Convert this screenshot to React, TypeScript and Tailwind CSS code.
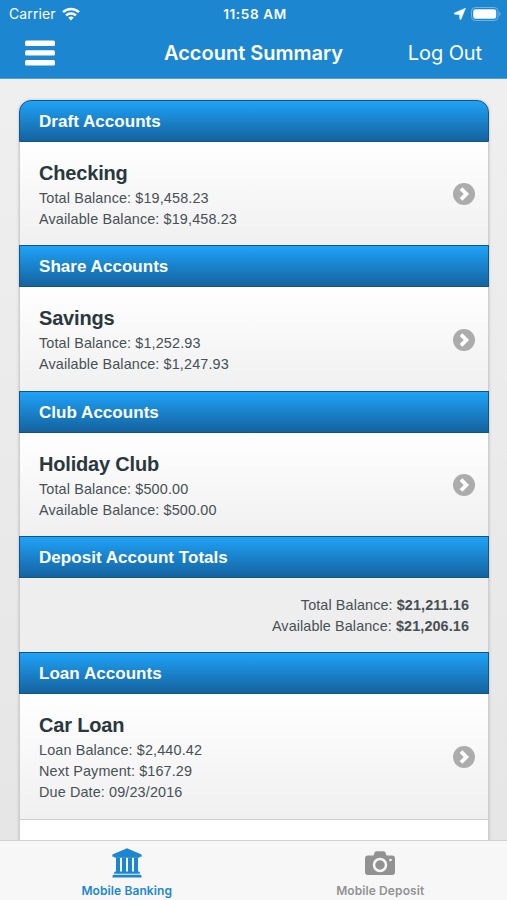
import React from "react";

type Account = {
  header: string;
  name: string;
  lines: string[];
  height: string;
};

const accounts: Account[] = [
  {
    header: "Draft Accounts",
    name: "Checking",
    height: "h-[103px]",
    lines: ["Total Balance: $19,458.23", "Available Balance: $19,458.23"],
  },
  {
    header: "Share Accounts",
    name: "Savings",
    height: "h-[104px]",
    lines: ["Total Balance: $1,252.93", "Available Balance: $1,247.93"],
  },
  {
    header: "Club Accounts",
    name: "Holiday Club",
    height: "h-[103px]",
    lines: ["Total Balance: $500.00", "Available Balance: $500.00"],
  },
];

const loan: Account = {
  header: "Loan Accounts",
  name: "Car Loan",
  height: "h-[125px]",
  lines: ["Loan Balance: $2,440.42", "Next Payment: $167.29", "Due Date: 09/23/2016"],
};

function SectionHeader({ title, first }: { title: string; first?: boolean }) {
  return (
    <div
      className={
        "h-[42px] shrink-0 border border-[#145580] bg-linear-to-b from-[#1fa3f8] to-[#14639f] pl-[19px] text-[17px] leading-[41px] font-bold tracking-[0.04px] text-white " +
        (first ? "rounded-t-[12px]" : "")
      }
    >
      {title}
    </div>
  );
}

function AccountRow({ account }: { account: Account }) {
  return (
    <div
      className={
        "flex shrink-0 items-center justify-between border-x border-[#cfcfcf] bg-linear-to-b from-white to-[#f0f0f0] pr-[13px] pl-[19px] " +
        account.height
      }
    >
      <div className="pt-1">
        <h2 className="mb-[3px] text-[20px] leading-[23px] font-bold tracking-[-0.18px] text-[#2a383e]">{account.name}</h2>
        {account.lines.map((line) => (
          <p key={line} className="text-[14.4px] leading-[21px] tracking-[0.13px] text-[#475054]">
            {line}
          </p>
        ))}
      </div>
      <svg viewBox="0 0 22 22" className="mt-px size-[22px]" fill="none">
        <circle cx="11" cy="11" r="11" fill="#acacac" />
        <path d="M8 5.6 L13.4 11 L8 16.4" stroke="#fff" strokeWidth="3.8" />
      </svg>
    </div>
  );
}

export default function App() {
  return (
    <div className="flex h-[900px] w-[507px] flex-col overflow-hidden bg-linear-to-b from-[#f0f0f0] to-[#e5e5e5] font-['Liberation_Sans',Arial,sans-serif]">
      <header className="h-[79px] shrink-0 border-b border-[#4ba0d9] bg-[#1c87d0] font-[Inter,sans-serif] text-white">
        <div className="grid h-[27px] grid-cols-3 items-center pr-[6px] pl-[9px] text-[13px]">
          <div className="flex items-center gap-[6px]">
            <span className="text-[14px] tracking-[0.1px]">Carrier</span>
            <svg viewBox="0 0 18 14" className="h-[14px] w-[18px]" fill="none" stroke="#fff" strokeWidth="2.4">
              <path d="M1 5.2 C5.5 .9 12.5 .9 17 5.2" />
              <path d="M4 8.4 C6.8 5.8 11.2 5.8 14 8.4" />
              <path d="M6.2 10.6 C7.8 9.2 10.2 9.2 11.8 10.6 L9 13.6 Z" fill="#fff" stroke="none" />
            </svg>
          </div>
          <span className="pt-px text-center text-[13.5px] font-semibold tracking-[0.65px]">11:58 AM</span>
          <div className="flex items-center justify-end gap-[5px]">
            <svg viewBox="0 0 12 12" className="size-3" fill="#fff">
              <path d="M11.5 .2 L.4 4.9 Q-.3 5.8 .8 6.3 L5.4 6.6 L5.9 11.3 Q6.3 12.2 7 11.3 Z" stroke="#fff" strokeWidth=".5" />
            </svg>
            <svg viewBox="0 0 30 14" className="h-[14px] w-[30px]" fill="none">
              <rect x=".5" y=".5" width="26.5" height="13" rx="3.8" stroke="#70b4e1" />
              <rect x="2.2" y="2.2" width="23" height="9.6" rx="2.4" fill="#fff" />
              <path d="M28.3 4.8 Q31 7 28.3 9.2 Z" fill="#70b4e1" />
            </svg>
          </div>
        </div>
        <div className="grid h-[51px] grid-cols-[1fr_auto_1fr] items-center px-[25px]">
          <svg viewBox="0 0 30 26" className="h-[26px] w-[30px]" fill="#fff">
            <rect y="0.5" width="30" height="5.4" rx="1.5" />
            <rect y="10.2" width="30" height="5.4" rx="1.5" />
            <rect y="20" width="30" height="5.4" rx="1.5" />
          </svg>
          <h1 className="text-[20px] font-semibold">Account Summary</h1>
          <span className="text-right text-[20px] tracking-[-0.1px]">Log Out</span>
        </div>
      </header>
      <main className="flex h-[761px] shrink-0 flex-col overflow-hidden pt-[21px] pr-[18px] pl-[19px]">
        <div className="flex shrink-0 flex-col rounded-t-[12px] shadow-[0_0_3px_rgba(0,0,0,0.2)]">
          {accounts.map((a, i) => (
            <React.Fragment key={a.header}>
              <SectionHeader title={a.header} first={i === 0} />
              <AccountRow account={a} />
            </React.Fragment>
          ))}
          <SectionHeader title="Deposit Account Totals" />
          <div className="flex h-[74px] flex-col justify-center border-x border-[#cfcfcf] bg-[#eeeeee] pt-[2px] pr-[19px] text-right text-[14.4px] leading-[21px] tracking-[0.1px] text-[#475054]">
            <p>
              Total Balance: <b>$21,211.16</b>
            </p>
            <p>
              Available Balance: <b>$21,206.16</b>
            </p>
          </div>
          <SectionHeader title={loan.header} />
          <AccountRow account={loan} />
          <div className="h-[40px] border-x border-t border-[#cfcfcf] bg-white" />
        </div>
      </main>
      <nav className="grid h-[60px] shrink-0 grid-cols-2 border-t border-[#d2d2d2] bg-[#f7f7f7] font-[Inter,sans-serif] text-[12px] font-semibold">
        <div className="flex flex-col items-center pt-[7px] text-[#1c87d0]">
          <svg viewBox="0 0 30 30" className="size-[30px]" fill="currentColor">
            <path d="M15 .3 L29.6 6.6 V8.8 H27.8 Q27.6 9.8 26.6 9.8 H3.4 Q2.4 9.8 2.2 8.8 H.4 V6.6 Z" />
            <path d="M4 9.5 H8 V23.5 H10 V9.5 H14 V23.5 H16 V9.5 H20 V23.5 H22 V9.5 H26 V23.5 H27 Q28 23.7 28 25.8 H2 Q2 23.7 3 23.5 H4 Z" />
            <path d="M1.4 26.8 H28.6 Q29.6 26.8 29.6 29.6 H.4 Q.4 26.8 1.4 26.8 Z" />
          </svg>
          <span className="mt-[5px] leading-[16px] tracking-[0.1px]">Mobile Banking</span>
        </div>
        <div className="flex flex-col items-center pt-[7px] text-[#929292]">
          <svg viewBox="0 0 30 30" className="size-[30px]">
            <path d="M8.5 7.5 L9.6 4.5 Q10.2 3.3 11.4 3.3 H18.6 Q19.8 3.3 20.4 4.5 L21.5 7.5 H27 Q30 7.5 30 10.5 V24 Q30 27 27 27 H3 Q0 27 0 24 V10.5 Q0 7.5 3 7.5 Z" fill="currentColor" />
            <circle cx="15" cy="17" r="6" fill="none" stroke="#f7f7f7" strokeWidth="2.5" />
            <circle cx="25.5" cy="12" r="1.3" fill="#f7f7f7" />
          </svg>
          <span className="mt-[5px] leading-[16px] tracking-[0.1px]">Mobile Deposit</span>
        </div>
      </nav>
    </div>
  );
}
